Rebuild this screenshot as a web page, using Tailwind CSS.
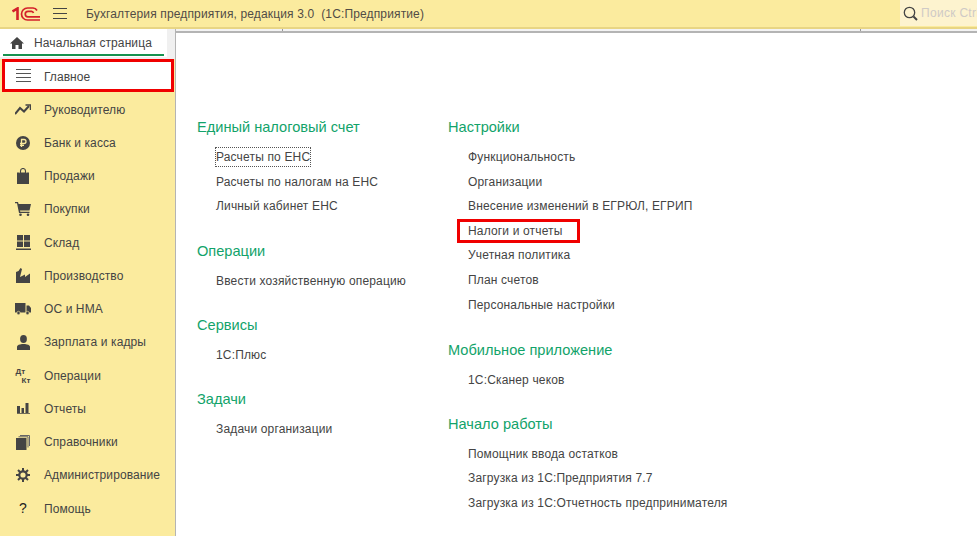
<!DOCTYPE html>
<html lang="ru">

<head>
    <meta charset="UTF-8">
    <script src="https://cdn.jsdelivr.net/npm/@tailwindcss/browser@4"></script>
    <title>Бухгалтерия предприятия</title>
</head>

<body class="w-[977px] h-[536px] overflow-hidden bg-white font-['Liberation_Sans',Arial,sans-serif] text-[12px] text-[#444]">
    <!-- top bar -->
    <header class="h-[29px] bg-[#fbeb9e] border-b-2 border-b-[#e8d584] flex items-center relative">
        <svg class="ml-[12px] w-[29px] h-[14px]" viewBox="0 0 29 14" fill="none" stroke="#d3202a">
            <path d="M0.500 4.500 L5.500 1.500 V13" stroke-width="2.600"/>
            <path d="M28 13 H15.500 A5.500 5.500 0 0 1 15.500 1 H21 A5 5 0 0 1 25 3.500" stroke-width="1.700"/>
            <path d="M28 9.800 H16 A2.700 2.700 0 0 1 16 4.300 H19.500 A2.500 2.500 0 0 1 21.500 6" stroke-width="1.700"/>
        </svg>
        <svg class="ml-[12px] w-[14px] h-[11px]" viewBox="0 0 14 11" stroke="#444" stroke-width="1.100">
            <path d="M0 .5 H14 M0 5.500 H14 M0 10.500 H14"/>
        </svg>
        <span class="ml-[19px] text-[#514c46] tracking-[0.14px]">Бухгалтерия предприятия, редакция 3.0&nbsp; (1С:Предприятие)</span>
        <div class="absolute right-0 top-0 h-[26px] w-[77px] bg-[#fdf3cf] flex items-center pl-[3px] overflow-hidden">
            <svg class="w-[15px] h-[15px] shrink-0" viewBox="0 0 15 15" fill="none" stroke="#444">
                <circle cx="6.500" cy="6.500" r="5.200" stroke-width="1.300"/>
                <path d="M10.500 10.500 L14 14" stroke-width="2"/>
            </svg>
            <span class="ml-[3px] text-[#cfcac6] whitespace-nowrap tracking-[0.3px]">Поиск Ctrl+Shift+F</span>
        </div>
    </header>

    <div class="flex h-[507px]">
        <!-- sidebar -->
        <aside class="w-[176px] shrink-0 bg-[#f0f0f0] border-r border-[#b4b4b4] flex flex-col">
            <div class="h-[28px] w-[167px] bg-white pl-[3px] pr-[3px]">
                <div class="h-[27px] pt-[3px] border-b-2 border-[#16924f] flex items-center pl-[7px]">
                    <svg class="w-[14px] h-[12px]" viewBox="0 0 14 12" fill="#444">
                        <path d="M7 0 L14 6.500 H12 V12 H8.500 V8 H5.500 V12 H2 V6.500 H0 Z"/>
                    </svg>
                    <span class="ml-[10px] tracking-[0.1px]">Начальная страница</span>
                </div>
            </div>
            <nav class="flex-1 bg-[#fbeb9e] mt-[2px] pl-[1px] flex flex-col">
                <a class="h-[33px] mb-[1px] ml-[1px] w-[172px] bg-white border-[3px] border-[#f00000] flex items-center">
                    <svg class="ml-[11px] w-[15px] h-[13px]" viewBox="0 0 15 13" stroke="#555">
                        <path d="M0 .5 H15 M0 4.500 H15 M0 8.500 H15 M0 12.500 H15"/>
                    </svg>
                    <span class="ml-[13px] pt-[2px] tracking-[0.05px]">Главное</span>
                </a>
                <a class="h-[33.250px] flex items-center">
                    <span class="w-[42px] flex justify-center pl-[2px]">
                        <svg class="w-[16px] h-[11px]" viewBox="0 0 16 11" fill="none" stroke="#444" stroke-width="2">
                            <path d="M0 10 L5 4 L9 7.500 L14 2"/>
                            <path d="M10.500 1 H15.500 V6" stroke-width="1.500"/>
                        </svg>
                    </span><span class="ml-[1px] tracking-[0.1px]">Руководителю</span>
                </a>
                <a class="h-[33.250px] flex items-center">
                    <span class="w-[42px] flex justify-center pl-[2px]">
                        <svg class="w-[14px] h-[14px]" viewBox="0 0 14 14">
                            <circle cx="7" cy="7" r="7" fill="#444"/>
                            <path d="M5.500 11 V3.500 H8 A2 2 0 0 1 8 7.500 H4 M4 9.300 H8" fill="none" stroke="#fbeb9e" stroke-width="1.300"/>
                        </svg>
                    </span><span class="ml-[1px] tracking-[0.1px]">Банк и касса</span>
                </a>
                <a class="h-[33.250px] flex items-center">
                    <span class="w-[42px] flex justify-center pl-[2px]">
                        <svg class="w-[12px] h-[16px]" viewBox="0 0 12 16">
                            <path d="M0 4.500 H2.500 L3 5.500 L4 4.500 H8 L9 5.500 L9.500 4.500 H12 V16 H0 Z" fill="#444"/>
                            <path d="M3.500 6 V3 A2.500 2.500 0 0 1 8.500 3 V6" fill="none" stroke="#444" stroke-width="1.100"/>
                        </svg>
                    </span><span class="ml-[1px] tracking-[0.1px]">Продажи</span>
                </a>
                <a class="h-[33.250px] flex items-center">
                    <span class="w-[42px] flex justify-center pl-[2px]">
                        <svg class="w-[16px] h-[14px]" viewBox="0 0 16 14" fill="#444">
                            <path d="M0 0 H3 L3.600 2 H16 L14.500 8.500 H5 L5.300 9.800 H14.500 V11 H4 L2 1.200 H0 Z"/>
                            <circle cx="5.500" cy="12.700" r="1.300"/>
                            <circle cx="13" cy="12.700" r="1.300"/>
                        </svg>
                    </span><span class="ml-[1px] tracking-[0.1px]">Покупки</span>
                </a>
                <a class="h-[33.250px] flex items-center">
                    <span class="w-[42px] flex justify-center pl-[2px]">
                        <svg class="w-[15px] h-[15px]" viewBox="0 0 15 15" fill="#444">
                            <path d="M1 0 H7 V5.500 H1 Z M8 0 H14 V5.500 H8 Z M1 6.500 H7 V12 H1 Z M8 6.500 H14 V12 H8 Z M0 13.500 H15 V15 H0 Z"/>
                        </svg>
                    </span><span class="ml-[1px] tracking-[0.1px]">Склад</span>
                </a>
                <a class="h-[33.250px] flex items-center">
                    <span class="w-[42px] flex justify-center pl-[2px]">
                        <svg class="w-[14px] h-[15px]" viewBox="0 0 14 15" fill="#444">
                            <path d="M0 15 V4 L2.500 3 L4.500 0 L6 1 L4 9 L9 6.500 V9 L14 5.500 V15 Z"/>
                        </svg>
                    </span><span class="ml-[1px] tracking-[0.1px]">Производство</span>
                </a>
                <a class="h-[33.250px] flex items-center">
                    <span class="w-[42px] flex justify-center pl-[2px]">
                        <svg class="w-[16px] h-[12px]" viewBox="0 0 16 12" fill="#444">
                            <path d="M0 0 H10.500 V9.500 H0 Z M11.500 2.500 H14 L16 5 V9.500 H11.500 Z"/>
                            <circle cx="3.500" cy="10" r="1.700" stroke="#fbeb9e" stroke-width=".6"/>
                            <circle cx="12.500" cy="10" r="1.700" stroke="#fbeb9e" stroke-width=".6"/>
                        </svg>
                    </span><span class="ml-[1px] tracking-[0.1px]">ОС и НМА</span>
                </a>
                <a class="h-[33.250px] flex items-center">
                    <span class="w-[42px] flex justify-center pl-[2px]">
                        <svg class="w-[13px] h-[15px]" viewBox="0 0 13 15" fill="#444">
                            <ellipse cx="6.500" cy="4" rx="3.400" ry="4"/>
                            <path d="M0 15 V12 Q0 10 3 9.500 L5 9 H8 L10 9.500 Q13 10 13 12 V15 Z"/>
                        </svg>
                    </span><span class="ml-[1px] tracking-[0.1px]">Зарплата и кадры</span>
                </a>
                <a class="h-[33.250px] flex items-center">
                    <span class="w-[42px] flex justify-center pl-[2px]">
                        <span class="relative block w-[15px] h-[16px] font-bold text-[8px] leading-none text-[#444]">
                            <span class="absolute left-0 top-0">Дт</span>
                            <span class="absolute left-[6px] top-[9px]">Кт</span>
                        </span>
                    </span><span class="ml-[1px] tracking-[0.1px]">Операции</span>
                </a>
                <a class="h-[33.250px] flex items-center">
                    <span class="w-[42px] flex justify-center pl-[2px]">
                        <svg class="w-[13px] h-[11px]" viewBox="0 0 13 11" fill="#444">
                            <path d="M0 3 H3 V10 H0 Z M4.500 5 H7 V10 H4.500 Z M8.500 0 H11.500 V10 H8.500 Z M0 10.200 H13 V11 H0 Z"/>
                        </svg>
                    </span><span class="ml-[1px] tracking-[0.1px]">Отчеты</span>
                </a>
                <a class="h-[33.250px] flex items-center">
                    <span class="w-[42px] flex justify-center pl-[2px]">
                        <svg class="w-[14px] h-[15px]" viewBox="0 0 14 15">
                            <path d="M4 .5 H13.500 V11 M2.500 1.800 H12 V12.500" fill="none" stroke="#666"/>
                            <path d="M0 3 H10.500 V15 H0 Z" fill="#444"/>
                        </svg>
                    </span><span class="ml-[1px] tracking-[0.1px]">Справочники</span>
                </a>
                <a class="h-[33.250px] flex items-center">
                    <span class="w-[42px] flex justify-center pl-[2px]">
                        <svg class="w-[14px] h-[14px]" viewBox="0 0 14 14" fill="none" stroke="#444">
                            <circle cx="7" cy="7" r="3.700" stroke-width="2.200"/>
                            <path d="M7 0 V3 M7 11 V14 M0 7 H3 M11 7 H14 M2 2 L4 4 M10 10 L12 12 M12 2 L10 4 M4 10 L2 12" stroke-width="2"/>
                        </svg>
                    </span><span class="ml-[1px] tracking-[0.1px]">Администрирование</span>
                </a>
                <a class="h-[33.250px] flex items-center">
                    <span class="w-[42px] text-center text-[14px] text-[#222] pl-[2px]">?</span>
                    <span class="ml-[1px] tracking-[0.1px]">Помощь</span>
                </a>
            </nav>
        </aside>

        <!-- content -->
        <main class="flex-1 flex flex-col">
            <div class="h-[4px] shrink-0 bg-[#f3f3f3] border-b-2 border-[#b4b4b4] relative">
                <span class="absolute left-[106px] top-0 w-px h-[2px] bg-[#999]"></span>
                <span class="absolute left-[684px] top-0 w-px h-[2px] bg-[#999]"></span>
            </div>
            <div class="flex pl-[21px] pt-[84px]">
                <div class="w-[251px]">
                    <section>
                        <h2 class="text-[#12a36a] text-[14.600px] leading-[20px]">Единый налоговый счет</h2>
                        <ul class="mt-[8px] pl-[19px] leading-[24.600px] tracking-[0.16px]">
                            <li><span class="outline-1 outline-dotted outline-[#555] -outline-offset-1 px-[1px] -ml-[1px] py-[3px]">Расчеты по ЕНС</span></li>
                            <li>Расчеты по налогам на ЕНС</li>
                            <li>Личный кабинет ЕНС</li>
                        </ul>
                    </section>
                    <section class="mt-[22px]">
                        <h2 class="text-[#12a36a] text-[14.600px] leading-[20px]">Операции</h2>
                        <ul class="mt-[8px] pl-[19px] leading-[24.600px] tracking-[0.16px]">
                            <li>Ввести хозяйственную операцию</li>
                        </ul>
                    </section>
                    <section class="mt-[22px]">
                        <h2 class="text-[#12a36a] text-[14.600px] leading-[20px]">Сервисы</h2>
                        <ul class="mt-[8px] pl-[19px] leading-[24.600px] tracking-[0.16px]">
                            <li>1С:Плюс</li>
                        </ul>
                    </section>
                    <section class="mt-[21px]">
                        <h2 class="text-[#12a36a] text-[14.600px] leading-[20px]">Задачи</h2>
                        <ul class="mt-[8px] pl-[19px] leading-[24.600px] tracking-[0.16px]">
                            <li>Задачи организации</li>
                        </ul>
                    </section>
                </div>
                <div>
                    <section>
                        <h2 class="text-[#12a36a] text-[14.600px] leading-[20px]">Настройки</h2>
                        <ul class="mt-[8px] pl-[20px] leading-[24.600px] tracking-[0.16px]">
                            <li>Функциональность</li>
                            <li>Организации</li>
                            <li>Внесение изменений в ЕГРЮЛ, ЕГРИП</li>
                            <li class="relative">Налоги и отчеты
                                <span class="absolute left-[-11px] top-0 w-[123px] h-[24px] border-[3px] border-[#f00000]"></span>
                            </li>
                            <li>Учетная политика</li>
                            <li>План счетов</li>
                            <li>Персональные настройки</li>
                        </ul>
                    </section>
                    <section class="mt-[23px]">
                        <h2 class="text-[#12a36a] text-[14.600px] leading-[20px]">Мобильное приложение</h2>
                        <ul class="mt-[8px] pl-[20px] leading-[24.600px] tracking-[0.16px]">
                            <li>1С:Сканер чеков</li>
                        </ul>
                    </section>
                    <section class="mt-[21px]">
                        <h2 class="text-[#12a36a] text-[14.600px] leading-[20px]">Начало работы</h2>
                        <ul class="mt-[8px] pl-[20px] leading-[24.600px] tracking-[0.16px]">
                            <li>Помощник ввода остатков</li>
                            <li>Загрузка из 1С:Предприятия 7.7</li>
                            <li>Загрузка из 1С:Отчетность предпринимателя</li>
                        </ul>
                    </section>
                </div>
            </div>
        </main>
    </div>
</body>

</html>
